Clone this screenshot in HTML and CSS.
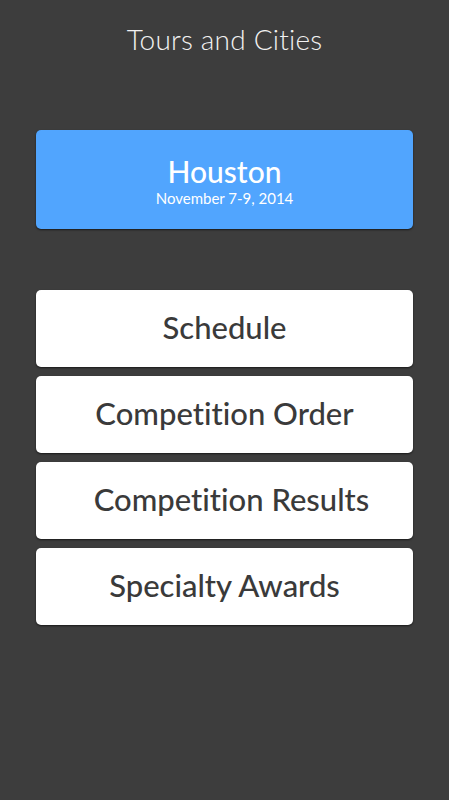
FILE: index.html
```html
<!DOCTYPE html>
<html>
<head>
<meta charset="utf-8">
<link rel="stylesheet" href="styles.css">
</head>
<body>
<div class="page">
  <h1 class="title">Tours and Cities</h1>
  <div class="city-card">
    <div class="city-name">Houston</div>
    <div class="city-date">November 7-9, 2014</div>
  </div>
  <nav class="menu">
    <div class="menu-item">Schedule</div>
    <div class="menu-item">Competition Order</div>
    <div class="menu-item menu-item--shifted">Competition Results</div>
    <div class="menu-item">Specialty Awards</div>
  </nav>
</div>
</body>
</html>
```
FILE: styles.css
```css
html, body {
  margin: 0;
  padding: 0;
  background: #3d3d3d;
}
body {
  font-family: Lato, "Open Sans", "DejaVu Sans", sans-serif;
  font-variant-ligatures: none;
  width: 449px;
  height: 800px;
  overflow: hidden;
}
.page {
  display: flex;
  flex-direction: column;
  padding: 0 36px;
}
.title {
  margin: 0;
  height: 78px;
  line-height: 78px;
  text-align: center;
  font-weight: 300;
  font-size: 28px;
  color: #f2f2f2;
  letter-spacing: 0.2px;
}
.city-card {
  margin-top: 52px;
  height: 99px;
  background: #51a5fe;
  border-radius: 5px;
  box-shadow: 0 1px 2px rgba(0,0,0,0.6);
  display: flex;
  flex-direction: column;
  align-items: center;
  justify-content: center;
  color: #ffffff;
}
.city-name {
  font-size: 30px;
  font-weight: 500;
  line-height: 34px;
  margin-top: 1px;
}
.city-date {
  font-size: 15px;
  line-height: 18px;
  margin-top: 1px;
}
.menu {
  margin-top: 61px;
  display: flex;
  flex-direction: column;
  gap: 9px;
}
.menu-item {
  height: 77px;
  background: #ffffff;
  border-radius: 5px;
  box-shadow: 0 1px 2px rgba(0,0,0,0.6);
  display: flex;
  align-items: center;
  justify-content: center;
  font-size: 31px;
  font-weight: 500;
  color: #3a3a3a;
  padding-bottom: 3px;
  box-sizing: border-box;
}
.menu-item--shifted {
  padding-left: 14px;
}
```
